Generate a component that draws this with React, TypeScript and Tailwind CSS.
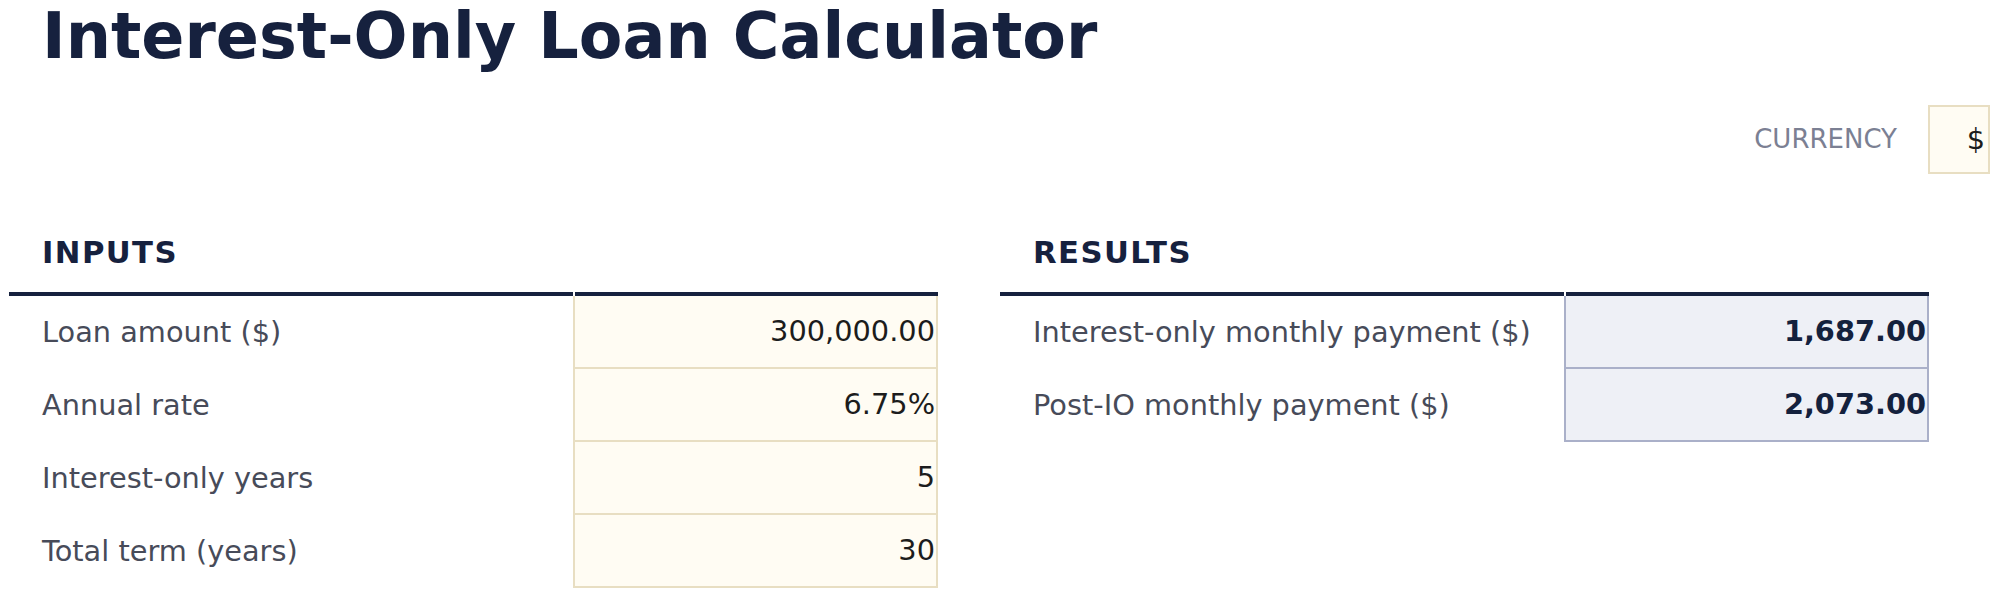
import React from "react";

const font = { fontFamily: '"DejaVu Sans", "Liberation Sans", sans-serif' };

function HeaderLine() {
  return (
    <div className="flex h-[4px]">
      <div className="w-[564px] bg-[#16213e]" />
      <div className="w-[2px]" />
      <div className="flex-1 bg-[#16213e]" />
    </div>
  );
}

function InputRow({ label, value }: { label: string; value: string }) {
  return (
    <div className="flex h-[73px]">
      <div className="w-[564px] flex items-center pl-[33px] text-[28.8px] text-[#474b59]">{label}</div>
      <div className="flex-1 flex items-center justify-end pr-[1px] bg-[#fffcf3] border-l-2 border-r-2 border-b-2 border-[#e8dec2] text-[28.8px] text-[#1c1c1c]">
        {value}
      </div>
    </div>
  );
}

function ResultRow({ label, value }: { label: string; value: string }) {
  return (
    <div className="flex h-[73px]">
      <div className="w-[564px] flex items-center pl-[33px] text-[28.8px] text-[#474b59]">{label}</div>
      <div className="flex-1 flex items-center justify-end pr-[1px] bg-[#eef0f6] border-l-2 border-r-2 border-b-2 border-[#aab0c9] text-[28.8px] font-bold text-[#14213d]">
        {value}
      </div>
    </div>
  );
}

export default function App() {
  return (
    <div className="w-[2000px] h-[598px] bg-white pl-[9px] pr-[10px] overflow-hidden" style={font}>
      <div className="pt-[6px] pl-[33px]">
        <h1 className="text-[63.6px] leading-[60px] font-bold text-[#16213e] whitespace-nowrap">Interest-Only Loan Calculator</h1>
      </div>
      <div className="mt-[39px] flex justify-end items-center">
        <span className="text-[26px] text-[#7b8093]">CURRENCY</span>
        <div className="ml-[31px] w-[62px] h-[69px] bg-[#fffcf3] border-2 border-[#e8dec2] flex items-center justify-end pr-[3px] text-[28.8px] text-[#1c1c1c]">
          $
        </div>
      </div>
      <div className="mt-[62px] flex gap-[62px]">
        <div className="w-[929px]">
          <div className="pl-[33px] h-[34px] leading-[34px] text-[30.7px] font-bold tracking-[1.4px] text-[#16213e] mb-[22px]">INPUTS</div>
          <HeaderLine />
          <InputRow label="Loan amount ($)" value="300,000.00" />
          <InputRow label="Annual rate" value="6.75%" />
          <InputRow label="Interest-only years" value="5" />
          <InputRow label="Total term (years)" value="30" />
        </div>
        <div className="w-[929px]">
          <div className="pl-[33px] h-[34px] leading-[34px] text-[30.7px] font-bold tracking-[1.4px] text-[#16213e] mb-[22px]">RESULTS</div>
          <HeaderLine />
          <ResultRow label="Interest-only monthly payment ($)" value="1,687.00" />
          <ResultRow label="Post-IO monthly payment ($)" value="2,073.00" />
        </div>
      </div>
    </div>
  );
}
